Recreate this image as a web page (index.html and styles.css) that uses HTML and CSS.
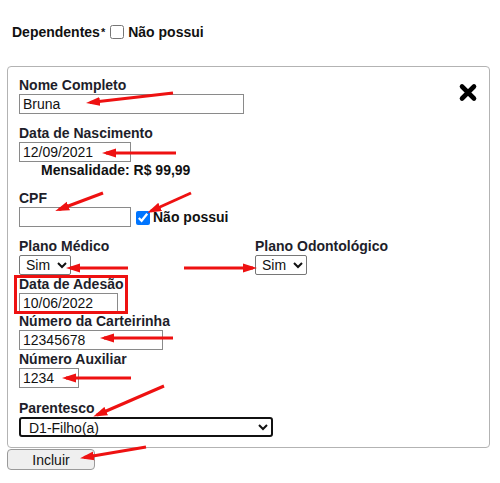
FILE: index.html
```html
<!DOCTYPE html>
<html lang="pt-BR">
<head>
<meta charset="utf-8">
<title>Dependentes</title>
<link rel="stylesheet" href="styles.css">
</head>
<body>
<div class="page">
  <div class="title">Dependentes<span class="ast">*</span> <input type="checkbox" class="chk"> Não possui</div>

  <div class="card">
    <svg class="close" width="20" height="19" viewBox="0 0 20 19"><path d="M4 3.5 L16 15.5 M16 3.5 L4 15.5" stroke="#000" stroke-width="4.6" stroke-linecap="round" fill="none"/></svg>

    <div class="field">
      <div class="lbl">Nome Completo</div>
      <input class="inp w-nome" type="text" value="Bruna">
    </div>

    <div class="field gap">
      <div class="lbl">Data de Nascimento</div>
      <input class="inp w-date" type="text" value="12/09/2021">
      <div class="mensal">Mensalidade: R$ 99,99</div>
    </div>

    <div class="field gap">
      <div class="lbl">CPF</div>
      <div class="cpf-row">
        <input class="inp w-date" type="text" value="">
        <input type="checkbox" class="chk chk2" checked>
        <span class="np">Não possui</span>
      </div>
    </div>

    <div class="planos gap">
      <div>
        <div class="lbl">Plano Médico</div>
        <select class="sel"><option>Sim</option></select>
      </div>
      <div>
        <div class="lbl">Plano Odontológico</div>
        <select class="sel"><option>Sim</option></select>
      </div>
    </div>

    <div class="field g1">
      <div class="lbl">Data de Adesão</div>
      <input class="inp w-ades" type="text" value="10/06/2022">
    </div>

    <div class="field">
      <div class="lbl">Número da Carteirinha</div>
      <input class="inp w-cart" type="text" value="12345678">
    </div>

    <div class="field g1">
      <div class="lbl">Número Auxiliar</div>
      <input class="inp w-aux" type="text" value="1234">
    </div>

    <div class="field gap2">
      <div class="lbl">Parentesco</div>
      <select class="sel sel-par"><option>D1-Filho(a)</option></select>
    </div>
  </div>

  <button class="btn" type="button">Incluir</button>
</div>

<svg class="notes" width="500" height="483" viewBox="0 0 500 483">
  <defs>
    <marker id="ah" markerUnits="userSpaceOnUse" markerWidth="14" markerHeight="10" refX="10" refY="5" orient="auto">
      <path d="M0,0.5 L14,5 L0,9.5 z" fill="#ee1111"/>
    </marker>
  </defs>
  <g stroke="#ee1111" stroke-width="3" fill="none" marker-end="url(#ah)">
    <line x1="173" y1="93" x2="90" y2="102.5"/>
    <line x1="176" y1="153" x2="106" y2="153"/>
    <line x1="103" y1="193" x2="59" y2="209.5"/>
    <line x1="191" y1="193" x2="151" y2="211"/>
    <line x1="128" y1="268" x2="70" y2="268"/>
    <line x1="184" y1="268" x2="253" y2="268"/>
    <line x1="173" y1="338" x2="104" y2="338"/>
    <line x1="131" y1="378" x2="66" y2="378"/>
    <line x1="164" y1="386" x2="97" y2="415"/>
    <line x1="146" y1="447" x2="84" y2="457.5"/>
  </g>
  <rect x="15.5" y="276.5" width="111" height="36" fill="none" stroke="#ee1111" stroke-width="3"/>
</svg>
</body>
</html>
```

FILE: styles.css
```css
html, body {
  margin: 0;
  padding: 0;
  background: #ffffff;
}

body {
  font-family: "Liberation Sans", Arial, sans-serif;
  font-size: 14px;
  color: #1c1c24;
  width: 500px;
  height: 483px;
  overflow: hidden;
}

.page {
  padding: 24px 0 0 7px;
}

.title {
  padding-left: 5px;
  font-weight: bold;
  line-height: 16px;
  display: flex;
  align-items: center;
  color: #111;
}

.title .ast {
  font-size: 11px;
  align-self: flex-start;
  margin-left: 1px;
}

.title .chk {
  margin: 0 4px 0 5px;
}

.chk {
  width: 14px;
  height: 14px;
  margin: 0;
  accent-color: #0075ff;
}

.card {
  position: relative;
  margin-top: 26px;
  width: 459px;
  border: 1px solid #b3b3b3;
  border-radius: 4px;
  padding: 10px 11px 10px 11px;
}

.close {
  position: absolute;
  top: 16px;
  right: 11px;
}

.field {
  display: flex;
  flex-direction: column;
  align-items: flex-start;
}

.gap { margin-top: 11px; }
.g1 { margin-top: 1px; }
.gap2 { margin-top: 12px; }

.lbl {
  font-weight: bold;
  line-height: 17px;
  color: #1e1e2a;
}

.inp {
  box-sizing: border-box;
  height: 20px;
  border: 1px solid #8a8a8a;
  border-radius: 0;
  padding: 0 3px;
  font-family: "Liberation Sans", Arial, sans-serif;
  font-size: 14px;
  color: #111;
  background: #fff;
  outline: none;
}

.w-nome { width: 225px; }
.w-date { width: 112px; }
.w-ades { width: 99px; }
.w-cart { width: 144px; }
.w-aux { width: 60px; }

.mensal {
  margin-left: 22px;
  font-weight: bold;
  line-height: 17px;
  color: #111;
}

.cpf-row {
  display: flex;
  align-items: center;
}

.chk2 {
  margin-left: 5px;
  margin-top: 2px;
}

.np {
  margin-left: 3px;
  font-weight: bold;
  color: #111;
}

.planos {
  display: grid;
  grid-template-columns: 236px 1fr;
}

.sel {
  box-sizing: border-box;
  height: 20px;
  width: 52px;
  font-family: "Liberation Sans", Arial, sans-serif;
  font-size: 14px;
  color: #111;
  border: 1px solid #767676;
  border-radius: 2px;
  background-color: #fff;
  padding: 0 0 0 2px;
}

.sel-par {
  width: 254px;
  border: 2px solid #111;
  border-radius: 3px;
  padding-left: 4px;
}

.btn {
  display: block;
  box-sizing: border-box;
  margin-top: 1px;
  width: 88px;
  height: 21px;
  font-family: "Liberation Sans", Arial, sans-serif;
  font-size: 14px;
  color: #111;
  background: #efefef;
  border: 1px solid #9a9a9a;
  border-radius: 4px;
  padding: 0;
}

.notes {
  position: absolute;
  left: 0;
  top: 0;
  pointer-events: none;
}
```
